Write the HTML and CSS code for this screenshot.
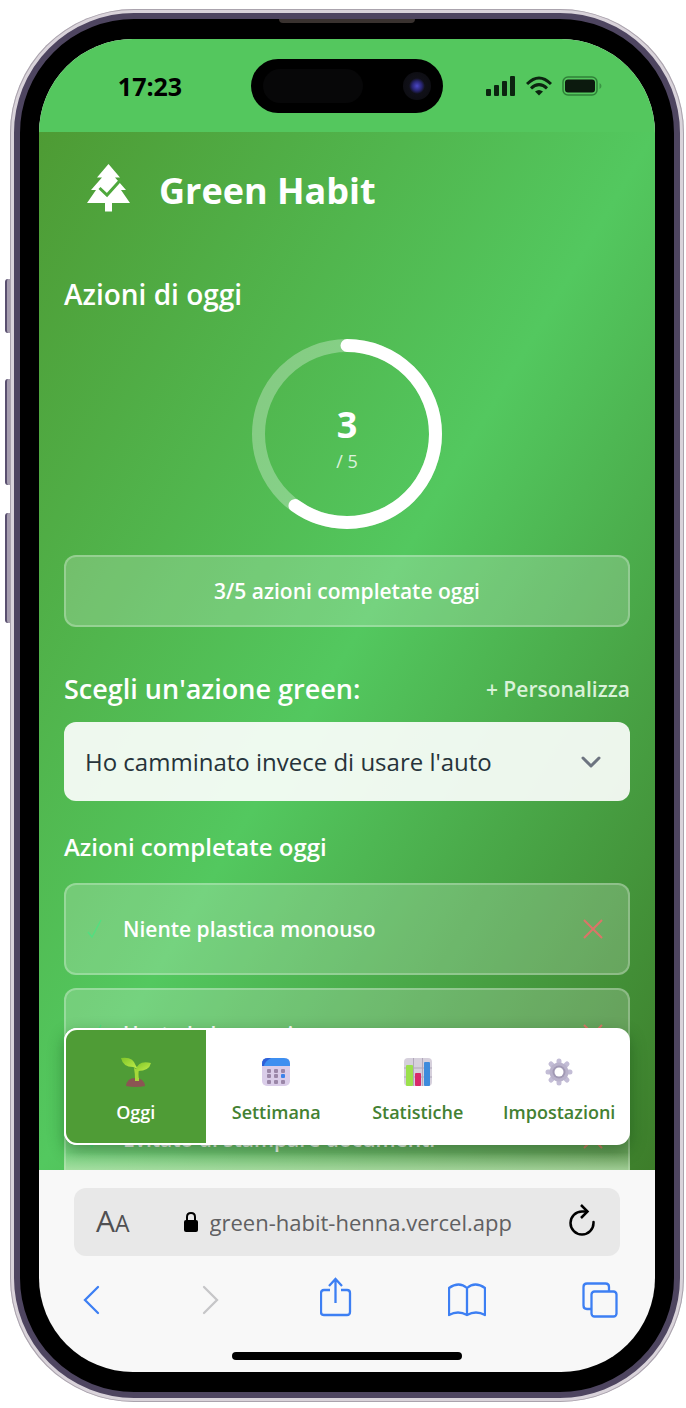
FILE: index.html
```
<!DOCTYPE html>
<html lang="it">
<head>
<meta charset="utf-8">
<meta name="viewport" content="width=device-width, initial-scale=1">
<title>Green Habit</title>
<link rel="stylesheet" href="styles.css">
</head>
<body>
<div class="phone">
  <span class="side-key side-key-action"></span>
  <span class="side-key side-key-up"></span>
  <span class="side-key side-key-down"></span>
  <div class="band">
    <span class="earpiece"></span>
    <div class="screen">
      <div class="status">
        <time class="clock">17:23</time>
        <div class="island"><span class="sensor"></span><span class="camera"></span></div>
        <div class="signals">
          <svg width="30" height="20" viewBox="0 0 30 20" fill="#0c2410"><rect x="0" y="13" width="5" height="7" rx="1"/><rect x="8" y="9" width="5" height="11" rx="1"/><rect x="16" y="5" width="5" height="15" rx="1"/><rect x="24" y="0" width="5" height="20" rx="1"/></svg>
          <svg width="26" height="20" viewBox="0 0 26 20" fill="none" stroke="#0c2410" stroke-width="3"><path d="M1 8Q13-4 25 8"/><path d="M5 12.300Q13 5 21 12.300"/><path d="M9 15.500Q13 12.500 17 15.500L13 19.500Z" fill="#0c2410" stroke="none"/></svg>
          <svg width="40" height="20" viewBox="0 0 40 20"><rect x="1" y="1" width="34" height="18" rx="5" fill="none" stroke="#2f8138" stroke-width="1.500"/><rect x="3" y="3.500" width="30" height="13" rx="3" fill="#0c1a0e"/><path d="M37.500 7v6q2-1 2-3t-2-3" fill="#3a9444"/></svg>
        </div>
      </div>
      <div class="app">
        <main class="content">
          <header class="brand">
            <svg class="tree" viewBox="0 0 43 48"><path fill="#fff" d="M21.500 0 33 13.500h-5L39 26h-5l9 13H25v8.500h-7V39H0l9-13H4l11-12.500h-5Z"/><path fill="none" stroke="#4fa83d" stroke-width="3" d="M12.500 24l7.500 7L34 15.500"/></svg>
            <h1 class="title">Green Habit</h1>
          </header>
          <h2 class="heading">Azioni di oggi</h2>
          <div class="ring">
            <svg class="ring-art" viewBox="0 0 190 190" fill="none" stroke-width="13"><circle cx="95" cy="95" r="88.500" stroke="#fff" stroke-opacity=".3"/><circle cx="95" cy="95" r="88.500" stroke="#fff" stroke-linecap="round" pathLength="100" stroke-dasharray="60 100" transform="rotate(-90 95 95)"/></svg>
            <div class="ring-label"><strong class="ring-count">3</strong><span class="ring-total">/ 5</span></div>
          </div>
          <p class="summary">3/5 azioni completate oggi</p>
          <div class="choose">
            <label class="choose-label" for="action">Scegli un'azione green:</label>
            <button class="customize" type="button">+ Personalizza</button>
          </div>
          <div class="picker">
            <select class="select" id="action"><option>Ho camminato invece di usare l'auto</option></select>
            <svg class="chevron" viewBox="0 0 20 12" fill="none" stroke="#6d7480" stroke-width="3" stroke-linecap="round" stroke-linejoin="round"><path d="M2 2l8 8 8-8"/></svg>
          </div>
          <h3 class="subheading">Azioni completate oggi</h3>
          <ul class="list">
            <li class="item"><svg class="check" viewBox="0 0 16 20"><path d="M1 13l4 5L14 1" fill="none" stroke="#53df80" stroke-width="1.500"/></svg><span class="item-name">Niente plastica monouso</span><button class="remove" type="button" aria-label="Rimuovi"><svg viewBox="0 0 20 20" width="20" height="20"><path d="M1 1l18 18M19 1L1 19" stroke="#dc7468" stroke-width="2"/></svg></button></li>
            <li class="item"><svg class="check" viewBox="0 0 16 20"><path d="M1 13l4 5L14 1" fill="none" stroke="#53df80" stroke-width="1.500"/></svg><span class="item-name">Usata la borraccia</span><button class="remove" type="button" aria-label="Rimuovi"><svg viewBox="0 0 20 20" width="20" height="20"><path d="M1 1l18 18M19 1L1 19" stroke="#dc7468" stroke-width="2"/></svg></button></li>
            <li class="item"><svg class="check" viewBox="0 0 16 20"><path d="M1 13l4 5L14 1" fill="none" stroke="#53df80" stroke-width="1.500"/></svg><span class="item-name">Evitato di stampare documenti</span><button class="remove" type="button" aria-label="Rimuovi"><svg viewBox="0 0 20 20" width="20" height="20"><path d="M1 1l18 18M19 1L1 19" stroke="#dc7468" stroke-width="2"/></svg></button></li>
          </ul>
        </main>
        <nav class="tabs">
          <button class="tab tab-active" type="button">
            <svg class="tab-icon" viewBox="0 0 30 30"><defs><linearGradient id="leaf" x1="0" y1="0" x2="1" y2="1"><stop offset="0" stop-color="#7fc528"/><stop offset="1" stop-color="#c3ef4b"/></linearGradient></defs><path d="M13 11q1 5 1 12h4q-1-7 0-10" fill="#a6d83a"/><path d="M0 1q12-2 15 8l2 3-5-2Q2 10 0 1Z" fill="url(#leaf)"/><path d="M30 6Q17 3 15 13q0 2 2 1 11 0 13-8Z" fill="url(#leaf)"/><path d="M5 29q1-8 9-8 9 0 10 8-9 2-19 0Z" fill="#8b5553"/><path d="M14 21h4v3h-4Z" fill="#a6d83a"/></svg>
            Oggi
          </button>
          <button class="tab" type="button">
            <svg class="tab-icon" viewBox="0 0 30 30"><rect x="1" y="1" width="28" height="28" rx="5" fill="#dacde9"/><path d="M1 9V7q0-6 6-6h16q6 0 6 6v2Z" fill="#3d8ff0"/><path d="M1 9V7q0-6 6-6h3Q4 4 3 9Z" fill="#2e5fd8"/><g fill="#9b87a8"><rect x="6" y="12" width="4" height="4" rx="1"/><rect x="13" y="12" width="4" height="4" rx="1"/><rect x="20" y="12" width="4" height="4" rx="1"/><rect x="6" y="17" width="4" height="4" rx="1"/><rect x="13" y="17" width="4" height="4" rx="1"/><rect x="6" y="23" width="4" height="4" rx="1"/><rect x="13" y="23" width="4" height="4" rx="1"/><rect x="20" y="23" width="4" height="4" rx="1"/></g><rect x="20" y="17" width="4" height="4" rx="1" fill="#3d83ea"/></svg>
            Settimana
          </button>
          <button class="tab" type="button">
            <svg class="tab-icon" viewBox="0 0 30 30"><rect x="1" y="1" width="28" height="28" rx="4" fill="#d6d0dc"/><path d="M1 11h28M1 20h28M10.500 1v28M19.500 1v28" stroke="#b1a8ba"/><rect x="3" y="8" width="7" height="21" rx="1" fill="#9be04c"/><rect x="12" y="16" width="6" height="13" rx="1" fill="#d92a6b"/><rect x="21" y="5" width="6" height="24" rx="1" fill="#3e8bdc"/></svg>
            Statistiche
          </button>
          <button class="tab" type="button">
            <svg class="tab-icon" viewBox="-15 -15 30 30"><g stroke="#c3bdd6" stroke-width="5" stroke-linecap="round"><path d="M0-11V11M-11 0H11M-8-8L8 8M8-8L-8 8"/></g><circle r="9.500" fill="#b9b2cb"/><circle r="6.500" fill="#a199b4"/><circle r="4.500" fill="#fff"/></svg>
            Impostazioni
          </button>
        </nav>
      </div>
      <div class="browser">
        <div class="address">
          <button class="icon-button text-size" type="button" aria-label="Dimensioni testo"><span class="big-a">A</span><span class="small-a">A</span></button>
          <svg class="lock" viewBox="0 0 16 22"><rect x="1" y="9" width="14" height="12" rx="2"/><path d="M4 10V6q0-4 4-4t4 4v4" fill="none" stroke="#000" stroke-width="2"/></svg>
          <input class="url" type="text" aria-label="Indirizzo" value="green-habit-henna.vercel.app">
          <button class="icon-button reload" type="button" aria-label="Ricarica"><svg width="28" height="32" viewBox="0 0 28 32" fill="none" stroke="#000" stroke-width="2.500"><path d="M18 7.500H14A11.500 11.500 0 1 0 25.500 19v-1" stroke-linecap="round"/><path d="M13 1l6.500 6.500L13 14"/></svg></button>
        </div>
        <div class="toolbar">
          <button class="icon-button" type="button" aria-label="Indietro"><svg width="22" height="30" viewBox="0 0 22 30" fill="none" stroke="#3d7ff3" stroke-width="2.300" stroke-linecap="round"><path d="M15 2L2 15l13 13"/></svg></button>
          <button class="icon-button" type="button" aria-label="Avanti"><svg width="22" height="30" viewBox="0 0 22 30" fill="none" stroke="#c6c6c8" stroke-width="2.300" stroke-linecap="round"><path d="M3 2l13 13L3 28"/></svg></button>
          <button class="icon-button share" type="button" aria-label="Condividi"><svg width="32" height="40" viewBox="0 0 32 40" fill="none" stroke="#3d7ff3" stroke-width="2.300"><path d="M10 13H4q-3 0-3 3v19q0 3 3 3h23q3 0 3-3V16q0-3-3-3h-6M15.500 26V3M9 9l6.500-7L22 9"/></svg></button>
          <button class="icon-button" type="button" aria-label="Segnalibri"><svg width="38" height="34" viewBox="0 0 38 34" fill="none" stroke="#3d7ff3" stroke-width="2.300" stroke-linejoin="round"><path d="M19 32V5Q11-2 1 5v27q9-5 18 0 9-5 18 0V5Q27-2 19 5"/></svg></button>
          <button class="icon-button" type="button" aria-label="Schede"><svg width="36" height="36" viewBox="0 0 36 36" fill="none" stroke="#3d7ff3" stroke-width="2.300"><rect x="9.500" y="9.500" width="25" height="25" rx="3"/><path d="M9 27H5q-3.500 0-3.500-3.500V5Q1.500 1.500 5 1.500h18.500Q27 1.500 27 5v4"/></svg></button>
        </div>
        <span class="home-bar"></span>
      </div>
    </div>
  </div>
</div>
</body>
</html>
```
FILE: styles.css
```
* { box-sizing: border-box; }
body {
  margin: 0;
  padding: 9px 2px 5px 10px;
  background: #fff;
  color: #fff;
  font-family: "Open Sans", "Noto Sans", sans-serif;
}
h1, h2, h3, p, ul { margin: 0; padding: 0; }
button { margin: 0; padding: 0; border: 0; background: none; color: inherit; font: inherit; }
svg { display: block; flex: none; }

/* Device */
.phone {
  position: relative;
  padding: 4px;
  border-radius: 124px;
  background: #d9d3da;
  box-shadow: inset 0 0 0 1px #aaa3ad;
}
.side-key { position: absolute; left: -5px; width: 5px; border-radius: 3px 0 0 3px; background: #a59dae; border-left: 2px solid #5a5070; }
.side-key-action { top: 270px; height: 54px; }
.side-key-up { top: 370px; height: 106px; }
.side-key-down { top: 504px; height: 110px; }
.band {
  position: relative;
  padding: 20px 19px;
  border: 6px solid #4e4560;
  border-radius: 120px;
  background: #000;
}
.earpiece { position: absolute; top: 0; left: 50%; width: 136px; height: 4px; margin-left: -68px; border-radius: 0 0 4px 4px; background: #39322f; }
.screen {
  display: flex;
  flex-direction: column;
  overflow: hidden;
  border-radius: 94px;
  background: #f8f8f8;
}

/* Status bar */
.status {
  display: grid;
  grid-template-columns: 1fr 192px 1fr;
  align-items: center;
  height: 93px;
  background: #54c75e;
  color: #000;
}
.clock { padding-left: 10px; text-align: center; font-size: 25px; font-weight: 700; line-height: 32px; }
.island { display: flex; align-items: center; justify-content: space-between; height: 54px; padding: 0 12px; border-radius: 27px; background: #000; }
.sensor { width: 100px; height: 34px; border-radius: 17px; background: #070708; }
.camera { width: 28px; height: 28px; border-radius: 50%; background: radial-gradient(circle, #4c48c8 0, #27246f 25%, #101018 40%, #0b0b0e 100%); }
.signals { display: flex; align-items: center; gap: 10px; padding-left: 43px; }

/* App */
.app { position: relative; height: 1038px; overflow: hidden; background: linear-gradient(to bottom right, #4e9b34, #53c85f 50%, #3d7d2a); }
.content { display: flex; flex-direction: column; padding: 32px 25px 0; }
.brand { display: flex; align-items: center; gap: 29px; height: 48px; padding-left: 23px; margin-bottom: 64px; }
.tree { width: 43px; height: 48px; }
.title { padding-top: 5px; font-size: 36px; font-weight: 700; line-height: 48px; }
.heading { font-size: 28px; font-weight: 600; line-height: 36px; }
.ring { display: grid; place-items: center; margin: 27px 0 26px; }
.ring-art, .ring-label { grid-area: 1 / 1; }
.ring-art { width: 190px; height: 190px; }
.ring-label { display: flex; flex-direction: column; align-items: center; padding-top: 10px; }
.ring-count { font-size: 36px; line-height: 44px; }
.ring-total { font-size: 18px; line-height: 28px; opacity: .8; }
.summary, .item { border: 2px solid rgba(255, 255, 255, .25); border-radius: 12px; background: rgba(255, 255, 255, .2); font-size: 21px; font-weight: 600; }
.summary { padding: 18px; text-align: center; line-height: 32px; }
.choose { display: flex; align-items: center; justify-content: space-between; margin: 44px 0 15px; }
.choose-label { font-size: 27px; font-weight: 600; line-height: 36px; }
.customize { color: #d9f2d8; font-size: 21px; font-weight: 600; line-height: 32px; }
.picker { display: grid; align-items: center; }
.select {
  grid-area: 1 / 1;
  width: 100%;
  height: 79px;
  padding: 0 60px 0 21px;
  appearance: none;
  border: 0;
  border-radius: 12px;
  background: rgba(255, 255, 255, .9);
  color: #26333a;
  font: 24px "Open Sans", "Noto Sans", sans-serif;
}
.chevron { grid-area: 1 / 1; justify-self: end; width: 20px; height: 12px; margin-right: 29px; pointer-events: none; }
.subheading { margin: 30px 0 20px; font-size: 24px; font-weight: 600; line-height: 32px; }
.list { display: flex; flex-direction: column; gap: 13px; list-style: none; }
.item { display: flex; align-items: center; height: 92px; padding: 0 25px 0 21px; line-height: 32px; }
.check { width: 16px; height: 20px; margin-right: 20px; }
.item-name { flex: 1; }

/* Tab bar */
.tabs {
  position: absolute;
  right: 25px;
  bottom: 25px;
  left: 25px;
  display: grid;
  grid-template-columns: repeat(4, 1fr);
  height: 117px;
  border-radius: 13px;
  background: #fff;
  box-shadow: 0 6px 16px rgba(20, 70, 20, .45);
}
.tabs::after {
  content: "";
  position: absolute;
  top: 100%;
  right: 0;
  left: 0;
  height: 25px;
  background: linear-gradient(transparent 30%, rgba(190, 230, 180, .65));
}
.tab { display: flex; flex-direction: column; align-items: center; justify-content: center; gap: 12px; padding-top: 9px; color: #438132; font-size: 18px; font-weight: 600; line-height: 26px; }
.tab-active { border: 2px solid #fff; border-right-width: 0; border-radius: 13px 0 0 13px; background: #4f9c36; color: #fff; }
.tab-icon { width: 30px; height: 30px; }

/* Browser chrome */
.browser { display: flex; flex-direction: column; align-items: stretch; padding: 18px 35px 12px; color: #505052; }
.address { display: flex; align-items: center; height: 68px; padding: 0 24px 0 22px; border-radius: 12px; background: #e8e8e8; }
.icon-button { flex: none; }
.text-size { display: flex; align-items: baseline; margin-right: 53px; line-height: 36px; }
.big-a { font-size: 30px; }
.small-a { font-size: 23px; }
.lock { width: 16px; height: 22px; margin-right: 11px; }
.url { flex: 1; min-width: 0; padding: 0; border: 0; background: none; color: #606062; font: 22px "Open Sans", "Noto Sans", sans-serif; }
.reload { padding-bottom: 4px; }
.toolbar { display: flex; align-items: center; justify-content: space-between; height: 48px; margin: 20px 2px 28px 9px; }
.share { margin-bottom: 6px; }
.home-bar { align-self: center; width: 230px; height: 8px; border-radius: 4px; background: #000; }
```
